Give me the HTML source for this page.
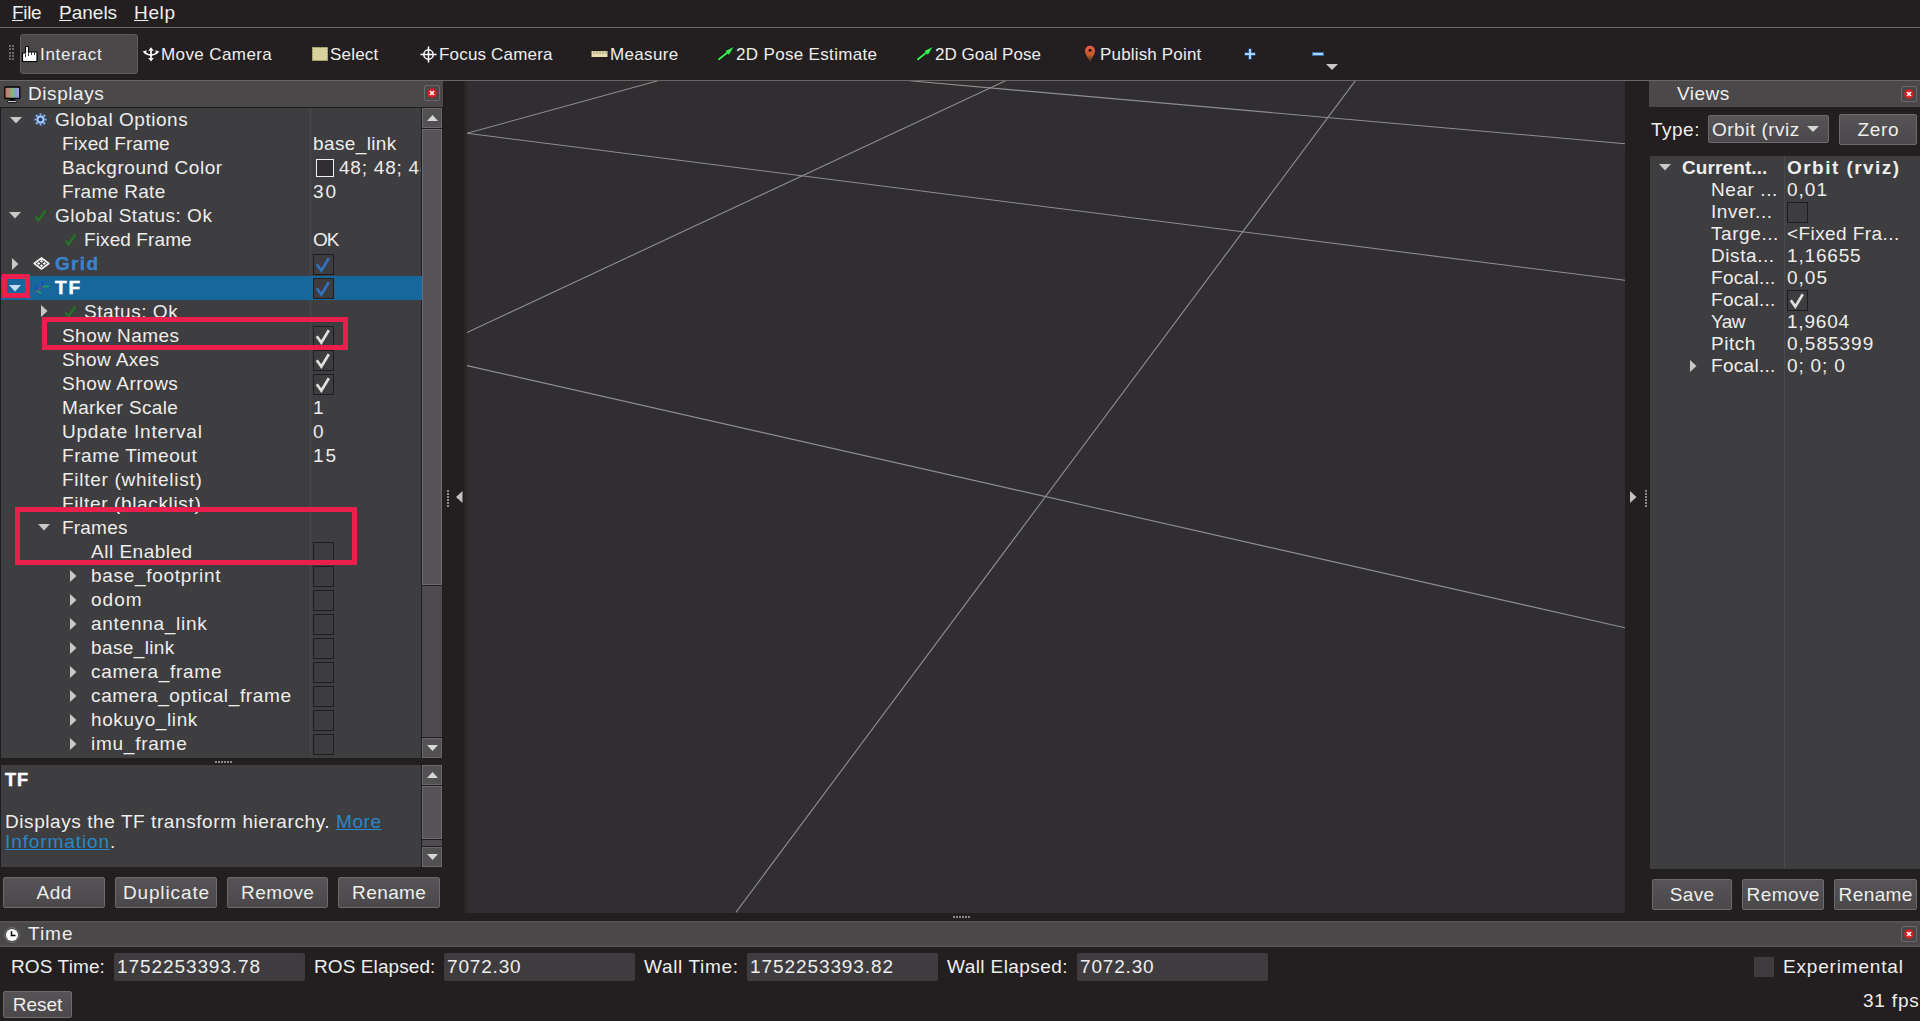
<!DOCTYPE html>
<html><head><meta charset="utf-8"><style>
html,body{margin:0;padding:0;width:1920px;height:1021px;overflow:hidden;background:#231f20}
body>div,body>svg{position:absolute}
div{position:absolute;box-sizing:border-box}
.t{white-space:nowrap;font-family:'Liberation Sans', sans-serif;color:#eeeeec}
.btn{font-family:'Liberation Sans', sans-serif;color:#eeeeec;text-align:center;letter-spacing:0.5px;background:linear-gradient(#565456,#4a484a);border:1px solid #6c6a6c;border-radius:2px;box-sizing:border-box}
</style></head><body>
<div style="left:0px;top:0px;width:1920px;height:1021px;background:#231f20"></div>
<div class="t" style="left:12px;top:3px;font-size:19px;line-height:19px;color:#eeeeec;letter-spacing:-0.333px;"><u>F</u>ile</div>
<div class="t" style="left:59px;top:3px;font-size:19px;line-height:19px;color:#eeeeec;letter-spacing:0.0px;"><u>P</u>anels</div>
<div class="t" style="left:134px;top:3px;font-size:19px;line-height:19px;color:#eeeeec;letter-spacing:0.667px;"><u>H</u>elp</div>
<div style="left:0px;top:26px;width:1920px;height:3px;background:#1f1b1c"></div>
<div style="left:0px;top:27px;width:1920px;height:1px;background:#6e6a6b"></div>
<div style="left:0px;top:80px;width:1920px;height:1px;background:#6a6667"></div>
<div style="left:9px;top:45.0px;width:2px;height:2px;background:#6a6869"></div>
<div style="left:12px;top:45.0px;width:2px;height:2px;background:#6a6869"></div>
<div style="left:9px;top:48.3px;width:2px;height:2px;background:#6a6869"></div>
<div style="left:12px;top:48.3px;width:2px;height:2px;background:#6a6869"></div>
<div style="left:9px;top:51.6px;width:2px;height:2px;background:#6a6869"></div>
<div style="left:12px;top:51.6px;width:2px;height:2px;background:#6a6869"></div>
<div style="left:9px;top:54.9px;width:2px;height:2px;background:#6a6869"></div>
<div style="left:12px;top:54.9px;width:2px;height:2px;background:#6a6869"></div>
<div style="left:9px;top:58.2px;width:2px;height:2px;background:#6a6869"></div>
<div style="left:12px;top:58.2px;width:2px;height:2px;background:#6a6869"></div>
<div style="left:20px;top:34px;width:118px;height:40px;background:#4a4748;border:1px solid #5e5c5d;border-radius:3px;box-sizing:border-box"></div>
<div class="t" style="left:40px;top:46px;font-size:17px;line-height:17px;color:#eeeeec;letter-spacing:0.714px;">Interact</div>
<div class="t" style="left:161px;top:46px;font-size:17px;line-height:17px;color:#eeeeec;letter-spacing:0.4px;">Move Camera</div>
<div class="t" style="left:330px;top:46px;font-size:17px;line-height:17px;color:#eeeeec;letter-spacing:0.2px;">Select</div>
<div class="t" style="left:439px;top:46px;font-size:17px;line-height:17px;color:#eeeeec;letter-spacing:0.182px;">Focus Camera</div>
<div class="t" style="left:610px;top:46px;font-size:17px;line-height:17px;color:#eeeeec;letter-spacing:0.333px;">Measure</div>
<div class="t" style="left:736px;top:46px;font-size:17px;line-height:17px;color:#eeeeec;letter-spacing:0.333px;">2D Pose Estimate</div>
<div class="t" style="left:935px;top:46px;font-size:17px;line-height:17px;color:#eeeeec;letter-spacing:0.0px;">2D Goal Pose</div>
<div class="t" style="left:1100px;top:46px;font-size:17px;line-height:17px;color:#eeeeec;letter-spacing:0.167px;">Publish Point</div>
<svg style="position:absolute;left:21px;top:45px;" width="18" height="18" viewBox="0 0 18 18"><path d="M4.5 1.5 h3 v5.5 h8.5 v9.5 h-14.5 v-8.5 h3z" fill="#fff" stroke="#000" stroke-width="1.2" stroke-linejoin="round"/><path d="M7.5 7v4M10.5 7v3M13.5 7v3M4.5 9v3" stroke="#222" stroke-width="0.9"/></svg>
<svg style="position:absolute;left:142px;top:46px;" width="18" height="17" viewBox="0 0 18 17"><g fill="#fff" stroke="none"><path d="M9 1.3 L6.2 4.8 H11.8 Z"/><path d="M9 15.6 L6.2 12.1 H11.8 Z"/><path d="M0.6 5.6 L4.6 4.2 L3.9 8.6 Z"/><path d="M17.4 5.6 L13.4 4.2 L14.1 8.6 Z"/></g><g stroke="#fff" stroke-width="1.7" fill="none"><path d="M9 4v8.5"/><path d="M2.8 6.6 Q9 11.6 15.2 6.6"/></g></svg>
<svg style="position:absolute;left:311px;top:46px;" width="18" height="16" viewBox="0 0 18 16"><rect x="1.5" y="1.5" width="15" height="13" fill="#d8d39a" stroke="#bdb77a" stroke-dasharray="2 1"/></svg>
<svg style="position:absolute;left:420px;top:46px;" width="17" height="17" viewBox="0 0 17 17"><circle cx="8.5" cy="8.5" r="4.7" fill="none" stroke="#fff" stroke-width="1.5"/><line x1="8.5" y1="0.5" x2="8.5" y2="16.5" stroke="#fff" stroke-width="1.5"/><line x1="0.5" y1="8.5" x2="16.5" y2="8.5" stroke="#fff" stroke-width="1.5"/></svg>
<svg style="position:absolute;left:591px;top:50px;" width="17" height="8" viewBox="0 0 17 8"><rect x="0.5" y="1" width="16" height="6" fill="#e6dcb0"/><path d="M3 1v3M6 1v3M9 1v3M12 1v3M15 1v3" stroke="#8a8060" stroke-width="0.8"/></svg>
<svg style="position:absolute;left:717px;top:46px;" width="17" height="16" viewBox="0 0 17 16"><path d="M2 13.3 L16.5 1.2" stroke="#101010" stroke-width="3.2" stroke-linecap="round" opacity="0.7"/><path d="M2 13.3 L12 5.2" stroke="#36f050" stroke-width="2" stroke-linecap="round"/><path d="M16.6 1.1 L8.6 5 L11.9 8.8 Z" fill="#36f050"/></svg>
<svg style="position:absolute;left:916px;top:46px;" width="17" height="16" viewBox="0 0 17 16"><path d="M2 13.3 L16.5 1.2" stroke="#101010" stroke-width="3.2" stroke-linecap="round" opacity="0.7"/><path d="M2 13.3 L12 5.2" stroke="#36f050" stroke-width="2" stroke-linecap="round"/><path d="M16.6 1.1 L8.6 5 L11.9 8.8 Z" fill="#36f050"/></svg>
<svg style="position:absolute;left:1084px;top:45px;" width="12" height="18" viewBox="0 0 12 18"><defs><linearGradient id="pg" x1="0" x2="0" y1="0" y2="1"><stop offset="0" stop-color="#e8604a"/><stop offset="0.55" stop-color="#c85a28"/><stop offset="1" stop-color="#6a5030" stop-opacity="0.5"/></linearGradient></defs><path d="M6 17 C3.5 12 1 9.5 1 5.8 A5 5 0 0 1 11 5.8 C11 9.5 8.5 12 6 17Z" fill="url(#pg)"/><circle cx="6" cy="5.3" r="1.5" fill="#2a0e08"/></svg>
<svg style="position:absolute;left:1244px;top:48px;" width="12" height="12" viewBox="0 0 12 12"><path d="M6 0.5v11M0.5 6h11" stroke="#2a5a9a" stroke-width="3.4"/><path d="M6 1v10M1 6h10" stroke="#a8d4ff" stroke-width="2"/></svg>
<div style="left:1312px;top:52px;width:12px;height:4px;background:#a8d4ff;border:1px solid #3a6aaa"></div>
<svg style="position:absolute;left:1326px;top:64px;" width="12" height="6" viewBox="0 0 12 6"><path d="M0 0h12L6 6z" fill="#c8c6c8"/></svg>
<div style="left:467px;top:81px;width:1158px;height:832px;background:#302e30"></div>
<svg style="position:absolute;left:467px;top:81px;" width="1158" height="832" viewBox="0 0 1158 832"><line x1="0" y1="52.30000000000001" x2="190.79999999999995" y2="-0.20000000000000284" stroke="#8f8e90" stroke-width="1.1"/><line x1="0" y1="52.30000000000001" x2="1158" y2="199.3" stroke="#8f8e90" stroke-width="1.1"/><line x1="0" y1="251.5" x2="538.5" y2="-0.20000000000000284" stroke="#8f8e90" stroke-width="1.1"/><line x1="442.70000000000005" y1="-0.20000000000000284" x2="1158" y2="62.69999999999999" stroke="#8f8e90" stroke-width="1.1"/><line x1="0" y1="284.6" x2="1158" y2="546.8" stroke="#8f8e90" stroke-width="1.1"/><line x1="268.9" y1="831.3" x2="888.2" y2="-0.20000000000000284" stroke="#8f8e90" stroke-width="1.1"/></svg>
<svg style="position:absolute;left:456px;top:491px;" width="7" height="12" viewBox="0 0 7 12"><path d="M6.5 0v12L0 6z" fill="#c4c0c4"/></svg>
<div style="left:447px;top:490px;width:2px;height:2px;background:#8a888a"></div>
<div style="left:447px;top:493px;width:2px;height:2px;background:#8a888a"></div>
<div style="left:447px;top:496px;width:2px;height:2px;background:#8a888a"></div>
<div style="left:447px;top:499px;width:2px;height:2px;background:#8a888a"></div>
<div style="left:447px;top:502px;width:2px;height:2px;background:#8a888a"></div>
<div style="left:447px;top:505px;width:2px;height:2px;background:#8a888a"></div>
<svg style="position:absolute;left:1630px;top:491px;" width="7" height="12" viewBox="0 0 7 12"><path d="M0 0v12L6.5 6z" fill="#c4c0c4"/></svg>
<div style="left:1645px;top:490px;width:2px;height:2px;background:#8a888a"></div>
<div style="left:1645px;top:493px;width:2px;height:2px;background:#8a888a"></div>
<div style="left:1645px;top:496px;width:2px;height:2px;background:#8a888a"></div>
<div style="left:1645px;top:499px;width:2px;height:2px;background:#8a888a"></div>
<div style="left:1645px;top:502px;width:2px;height:2px;background:#8a888a"></div>
<div style="left:1645px;top:505px;width:2px;height:2px;background:#8a888a"></div>
<div style="left:464px;top:81px;width:3px;height:832px;background:#282527"></div>
<div style="left:0px;top:81px;width:443px;height:27px;background:#4b4849"></div>
<div class="t" style="left:28px;top:84px;font-size:19px;line-height:19px;color:#eeeeec;letter-spacing:0.571px;">Displays</div>
<svg style="position:absolute;left:4px;top:86px;" width="17" height="18" viewBox="0 0 17 18"><defs><linearGradient id="mg" x1="0" x2="1" y1="0" y2="0"><stop offset="0" stop-color="#c8707a"/><stop offset="0.3" stop-color="#b88a70"/><stop offset="0.5" stop-color="#78c078"/><stop offset="0.75" stop-color="#8a98d0"/><stop offset="1" stop-color="#a8a0e8"/></linearGradient></defs><rect x="0.8" y="1" width="15" height="11.5" rx="1" fill="url(#mg)" stroke="#000" stroke-width="1.3"/><path d="M6.5 13h3.5l1 1.6h-5.5z" fill="#000"/><rect x="3.5" y="14.6" width="9.5" height="2" rx="1" fill="#ddd" stroke="#000" stroke-width="0.9"/></svg>
<div style="left:424px;top:85px;width:16px;height:16px;background:#4a4748;border:1px solid #6a6869;border-radius:2px;box-sizing:border-box"></div>
<svg style="position:absolute;left:427px;top:88px;" width="10" height="10" viewBox="0 0 10 10"><circle cx="5" cy="5" r="4.8" fill="#d81c22"/><path d="M3 3l4 4M7 3l-4 4" stroke="#fff" stroke-width="1.6"/></svg>
<div style="left:0px;top:108px;width:422px;height:650px;background:#3e3d3f"></div>
<div style="left:0px;top:107px;width:443px;height:1px;background:#1e1c1d"></div>
<div style="left:0px;top:108px;width:1px;height:650px;background:#1e1c1d"></div>
<div style="left:310px;top:108px;width:1px;height:650px;background:#4a494b"></div>
<div style="left:421px;top:108px;width:22px;height:650px;background:#1e1c1e"></div>
<div style="left:422px;top:108px;width:20px;height:650px;background:#4d4b4d"></div>
<div style="left:422px;top:108px;width:20px;height:20px;background:#525052;border:1px solid #6a686a;box-sizing:border-box"></div>
<svg style="position:absolute;left:427px;top:115px;" width="11" height="6" viewBox="0 0 11 6"><path d="M0 6h11L5.5 0z" fill="#d6d6d6"/></svg>
<div style="left:422px;top:738px;width:20px;height:20px;background:#525052;border:1px solid #6a686a;box-sizing:border-box"></div>
<svg style="position:absolute;left:427px;top:745px;" width="11" height="6" viewBox="0 0 11 6"><path d="M0 0h11L5.5 6z" fill="#d6d6d6"/></svg>
<div style="left:422px;top:129px;width:20px;height:456px;background:#555356;border:1px solid #6e6c6e;box-sizing:border-box"></div>
<div style="left:422px;top:585px;width:20px;height:1px;background:#1e1c1e"></div>
<div style="left:422px;top:128px;width:20px;height:1px;background:#1e1c1d"></div>
<div style="left:422px;top:737px;width:20px;height:1px;background:#1e1c1d"></div>
<div style="left:1px;top:276px;width:421px;height:24px;background:#17679d"></div>
<svg style="position:absolute;left:10px;top:117px;" width="12" height="7" viewBox="0 0 12 7"><path d="M0 0h12L6 6.5z" fill="#c8c8c8"/></svg>
<svg style="position:absolute;left:33px;top:112px;" width="15" height="15" viewBox="0 0 15 15"><g transform="translate(7.5,7.5) scale(0.87)"><g fill="#a9cdf8" stroke="#2a4a8a" stroke-width="0.6"><rect x="-1.3" y="-7.2" width="2.6" height="3.2" transform="rotate(0)"/><rect x="-1.3" y="-7.2" width="2.6" height="3.2" transform="rotate(45)"/><rect x="-1.3" y="-7.2" width="2.6" height="3.2" transform="rotate(90)"/><rect x="-1.3" y="-7.2" width="2.6" height="3.2" transform="rotate(135)"/><rect x="-1.3" y="-7.2" width="2.6" height="3.2" transform="rotate(180)"/><rect x="-1.3" y="-7.2" width="2.6" height="3.2" transform="rotate(225)"/><rect x="-1.3" y="-7.2" width="2.6" height="3.2" transform="rotate(270)"/><rect x="-1.3" y="-7.2" width="2.6" height="3.2" transform="rotate(315)"/></g><circle r="5" fill="#a9cdf8" stroke="#2a4a8a" stroke-width="0.6"/><circle r="2.3" fill="#2a3a6a"/></g></svg>
<div class="t" style="left:55px;top:110px;font-size:19px;line-height:19px;color:#eeeeec;letter-spacing:0.538px;">Global Options</div>
<div class="t" style="left:62px;top:134px;font-size:19px;line-height:19px;color:#eeeeec;letter-spacing:0.1px;">Fixed Frame</div>
<div class="t" style="left:313px;top:134px;font-size:19px;line-height:19px;color:#eeeeec;letter-spacing:0.375px;">base_link</div>
<div class="t" style="left:62px;top:158px;font-size:19px;line-height:19px;color:#eeeeec;letter-spacing:0.533px;">Background Color</div>
<div style="left:316px;top:159px;width:18px;height:18px;background:#302e31;border:1.5px solid #f0f0f0;box-sizing:border-box"></div>
<div style="left:339px;top:158px;width:82px;height:22px;overflow:hidden"><div class="t" style="left:0;top:0;font-size:19px;line-height:19px;color:#eeeeec;letter-spacing:0.778px;white-space:nowrap">48; 48; 48</div></div>
<div class="t" style="left:62px;top:182px;font-size:19px;line-height:19px;color:#eeeeec;letter-spacing:0.333px;">Frame Rate</div>
<div class="t" style="left:313px;top:182px;font-size:19px;line-height:19px;color:#eeeeec;letter-spacing:2.0px;">30</div>
<svg style="position:absolute;left:9px;top:212px;" width="12" height="7" viewBox="0 0 12 7"><path d="M0 0h12L6 6.5z" fill="#c8c8c8"/></svg>
<svg style="position:absolute;left:34px;top:209px;" width="13" height="13" viewBox="0 0 13 13"><path d="M1.5 7.5 L4.5 11.5 L11.5 1.5" fill="none" stroke="#217a26" stroke-width="2.3" opacity="0.9"/></svg>
<div class="t" style="left:55px;top:206px;font-size:19px;line-height:19px;color:#eeeeec;letter-spacing:0.5px;">Global Status: Ok</div>
<svg style="position:absolute;left:64px;top:233px;" width="13" height="13" viewBox="0 0 13 13"><path d="M1.5 7.5 L4.5 11.5 L11.5 1.5" fill="none" stroke="#217a26" stroke-width="2.3" opacity="0.9"/></svg>
<div class="t" style="left:84px;top:230px;font-size:19px;line-height:19px;color:#eeeeec;letter-spacing:0.1px;">Fixed Frame</div>
<div class="t" style="left:313px;top:230px;font-size:19px;line-height:19px;color:#eeeeec;letter-spacing:-1.0px;">OK</div>
<svg style="position:absolute;left:12px;top:258px;" width="7" height="12" viewBox="0 0 7 12"><path d="M0 0v12L6.5 6z" fill="#c8c8c8"/></svg>
<svg style="position:absolute;left:33px;top:257px;" width="17" height="13" viewBox="0 0 17 13"><path d="M8.5 1 L15.8 6.5 L8.5 12 L1.2 6.5 Z" fill="none" stroke="#f4f4f4" stroke-width="1.6" stroke-linejoin="round"/><path d="M8.5 2.8L10.225 4.3L8.5 5.8L6.775 4.3Z" fill="#f4f4f4"/><path d="M5.7 5.0L7.425 6.5L5.7 8.0L3.9750000000000005 6.5Z" fill="#f4f4f4"/><path d="M11.3 5.0L13.025 6.5L11.3 8.0L9.575000000000001 6.5Z" fill="#f4f4f4"/><path d="M8.5 7.199999999999999L10.225 8.7L8.5 10.2L6.775 8.7Z" fill="#f4f4f4"/></svg>
<div class="t" style="left:55px;top:254px;font-size:19px;line-height:19px;color:#3a82cc;letter-spacing:1.333px;font-weight:bold;-webkit-text-stroke:0.4px #3a82cc">Grid</div>
<div style="left:313px;top:254px;width:21px;height:21px;background:#3d3c3e;border:1px solid #1f1d1f;box-sizing:border-box"></div>
<svg style="position:absolute;left:315px;top:257px;" width="17" height="16" viewBox="0 0 17 16"><path d="M1.8 7.2 L6.3 13.6 L13.8 1.2" fill="none" stroke="#2f72c0" stroke-width="2.7" stroke-linejoin="miter"/></svg>
<svg style="position:absolute;left:9px;top:285px;" width="12" height="7" viewBox="0 0 12 7"><path d="M0 0h12L6 6.5z" fill="#c8dcf0"/></svg>
<svg style="position:absolute;left:33px;top:279px;" width="17" height="16" viewBox="0 0 17 16"><g stroke-width="1.5" opacity="0.85"><path d="M9.5 2V7.5" stroke="#1a3ad8"/><path d="M10 7.5H16" stroke="#20b848"/><path d="M9.5 7.5L1.5 14" stroke="#c04050" stroke-dasharray="1.5 1"/><path d="M3.6 6.8V10.6" stroke="#1a3ad8"/><path d="M4.5 12.2L8 14" stroke="#20b848"/></g></svg>
<div class="t" style="left:55px;top:278px;font-size:19px;line-height:19px;color:#ffffff;letter-spacing:2.0px;font-weight:bold;-webkit-text-stroke:0.5px #fff">TF</div>
<div style="left:313px;top:278px;width:21px;height:21px;background:#3d3c3e;border:1px solid #1f1d1f;box-sizing:border-box"></div>
<svg style="position:absolute;left:315px;top:281px;" width="17" height="16" viewBox="0 0 17 16"><path d="M1.8 7.2 L6.3 13.6 L13.8 1.2" fill="none" stroke="#2f72c0" stroke-width="2.7" stroke-linejoin="miter"/></svg>
<svg style="position:absolute;left:41px;top:305px;" width="7" height="12" viewBox="0 0 7 12"><path d="M0 0v12L6.5 6z" fill="#c8c8c8"/></svg>
<svg style="position:absolute;left:64px;top:305px;" width="13" height="13" viewBox="0 0 13 13"><path d="M1.5 7.5 L4.5 11.5 L11.5 1.5" fill="none" stroke="#217a26" stroke-width="2.3" opacity="0.9"/></svg>
<div class="t" style="left:84px;top:302px;font-size:19px;line-height:19px;color:#eeeeec;letter-spacing:0.556px;">Status: Ok</div>
<div class="t" style="left:62px;top:326px;font-size:19px;line-height:19px;color:#eeeeec;letter-spacing:0.444px;">Show Names</div>
<div class="t" style="left:62px;top:350px;font-size:19px;line-height:19px;color:#eeeeec;letter-spacing:0.375px;">Show Axes</div>
<div class="t" style="left:62px;top:374px;font-size:19px;line-height:19px;color:#eeeeec;letter-spacing:0.5px;">Show Arrows</div>
<div class="t" style="left:62px;top:398px;font-size:19px;line-height:19px;color:#eeeeec;letter-spacing:0.364px;">Marker Scale</div>
<div class="t" style="left:62px;top:422px;font-size:19px;line-height:19px;color:#eeeeec;letter-spacing:0.786px;">Update Interval</div>
<div class="t" style="left:62px;top:446px;font-size:19px;line-height:19px;color:#eeeeec;letter-spacing:0.583px;">Frame Timeout</div>
<div class="t" style="left:62px;top:470px;font-size:19px;line-height:19px;color:#eeeeec;letter-spacing:0.706px;">Filter (whitelist)</div>
<div class="t" style="left:62px;top:494px;font-size:19px;line-height:19px;color:#eeeeec;letter-spacing:0.647px;">Filter (blacklist)</div>
<div style="left:313px;top:326px;width:21px;height:21px;background:#3d3c3e;border:1px solid #1f1d1f;box-sizing:border-box"></div>
<svg style="position:absolute;left:315px;top:329px;" width="17" height="16" viewBox="0 0 17 16"><path d="M1.8 7.2 L6.3 13.6 L13.8 1.2" fill="none" stroke="#e0e0e0" stroke-width="2.7" stroke-linejoin="miter"/></svg>
<div style="left:313px;top:350px;width:21px;height:21px;background:#3d3c3e;border:1px solid #1f1d1f;box-sizing:border-box"></div>
<svg style="position:absolute;left:315px;top:353px;" width="17" height="16" viewBox="0 0 17 16"><path d="M1.8 7.2 L6.3 13.6 L13.8 1.2" fill="none" stroke="#e0e0e0" stroke-width="2.7" stroke-linejoin="miter"/></svg>
<div style="left:313px;top:374px;width:21px;height:21px;background:#3d3c3e;border:1px solid #1f1d1f;box-sizing:border-box"></div>
<svg style="position:absolute;left:315px;top:377px;" width="17" height="16" viewBox="0 0 17 16"><path d="M1.8 7.2 L6.3 13.6 L13.8 1.2" fill="none" stroke="#e0e0e0" stroke-width="2.7" stroke-linejoin="miter"/></svg>
<div class="t" style="left:313px;top:398px;font-size:19px;line-height:19px;color:#eeeeec;letter-spacing:0px;">1</div>
<div class="t" style="left:313px;top:422px;font-size:19px;line-height:19px;color:#eeeeec;letter-spacing:0px;">0</div>
<div class="t" style="left:313px;top:446px;font-size:19px;line-height:19px;color:#eeeeec;letter-spacing:2.0px;">15</div>
<svg style="position:absolute;left:38px;top:524px;" width="12" height="7" viewBox="0 0 12 7"><path d="M0 0h12L6 6.5z" fill="#c8c8c8"/></svg>
<div class="t" style="left:62px;top:518px;font-size:19px;line-height:19px;color:#eeeeec;letter-spacing:0.2px;">Frames</div>
<div class="t" style="left:91px;top:542px;font-size:19px;line-height:19px;color:#eeeeec;letter-spacing:0.5px;">All Enabled</div>
<div style="left:313px;top:542px;width:21px;height:21px;background:#3d3c3e;border:1px solid #1f1d1f;box-sizing:border-box"></div>
<svg style="position:absolute;left:70px;top:570px;" width="7" height="12" viewBox="0 0 7 12"><path d="M0 0v12L6.5 6z" fill="#c8c8c8"/></svg>
<div class="t" style="left:91px;top:566px;font-size:19px;line-height:19px;color:#eeeeec;letter-spacing:0.692px;">base_footprint</div>
<div style="left:313px;top:566px;width:21px;height:21px;background:#3d3c3e;border:1px solid #1f1d1f;box-sizing:border-box"></div>
<svg style="position:absolute;left:70px;top:594px;" width="7" height="12" viewBox="0 0 7 12"><path d="M0 0v12L6.5 6z" fill="#c8c8c8"/></svg>
<div class="t" style="left:91px;top:590px;font-size:19px;line-height:19px;color:#eeeeec;letter-spacing:1.0px;">odom</div>
<div style="left:313px;top:590px;width:21px;height:21px;background:#3d3c3e;border:1px solid #1f1d1f;box-sizing:border-box"></div>
<svg style="position:absolute;left:70px;top:618px;" width="7" height="12" viewBox="0 0 7 12"><path d="M0 0v12L6.5 6z" fill="#c8c8c8"/></svg>
<div class="t" style="left:91px;top:614px;font-size:19px;line-height:19px;color:#eeeeec;letter-spacing:0.727px;">antenna_link</div>
<div style="left:313px;top:614px;width:21px;height:21px;background:#3d3c3e;border:1px solid #1f1d1f;box-sizing:border-box"></div>
<svg style="position:absolute;left:70px;top:642px;" width="7" height="12" viewBox="0 0 7 12"><path d="M0 0v12L6.5 6z" fill="#c8c8c8"/></svg>
<div class="t" style="left:91px;top:638px;font-size:19px;line-height:19px;color:#eeeeec;letter-spacing:0.375px;">base_link</div>
<div style="left:313px;top:638px;width:21px;height:21px;background:#3d3c3e;border:1px solid #1f1d1f;box-sizing:border-box"></div>
<svg style="position:absolute;left:70px;top:666px;" width="7" height="12" viewBox="0 0 7 12"><path d="M0 0v12L6.5 6z" fill="#c8c8c8"/></svg>
<div class="t" style="left:91px;top:662px;font-size:19px;line-height:19px;color:#eeeeec;letter-spacing:0.727px;">camera_frame</div>
<div style="left:313px;top:662px;width:21px;height:21px;background:#3d3c3e;border:1px solid #1f1d1f;box-sizing:border-box"></div>
<svg style="position:absolute;left:70px;top:690px;" width="7" height="12" viewBox="0 0 7 12"><path d="M0 0v12L6.5 6z" fill="#c8c8c8"/></svg>
<div class="t" style="left:91px;top:686px;font-size:19px;line-height:19px;color:#eeeeec;letter-spacing:0.632px;">camera_optical_frame</div>
<div style="left:313px;top:686px;width:21px;height:21px;background:#3d3c3e;border:1px solid #1f1d1f;box-sizing:border-box"></div>
<svg style="position:absolute;left:70px;top:714px;" width="7" height="12" viewBox="0 0 7 12"><path d="M0 0v12L6.5 6z" fill="#c8c8c8"/></svg>
<div class="t" style="left:91px;top:710px;font-size:19px;line-height:19px;color:#eeeeec;letter-spacing:0.6px;">hokuyo_link</div>
<div style="left:313px;top:710px;width:21px;height:21px;background:#3d3c3e;border:1px solid #1f1d1f;box-sizing:border-box"></div>
<svg style="position:absolute;left:70px;top:738px;" width="7" height="12" viewBox="0 0 7 12"><path d="M0 0v12L6.5 6z" fill="#c8c8c8"/></svg>
<div class="t" style="left:91px;top:734px;font-size:19px;line-height:19px;color:#eeeeec;letter-spacing:0.75px;">imu_frame</div>
<div style="left:313px;top:734px;width:21px;height:21px;background:#3d3c3e;border:1px solid #1f1d1f;box-sizing:border-box"></div>
<div style="left:2px;top:274px;width:28px;height:24px;border:5px solid #ec1e4e;box-sizing:border-box"></div>
<div style="left:42px;top:317px;width:306px;height:33px;border:5px solid #ec1e4e;box-sizing:border-box"></div>
<div style="left:15px;top:507px;width:342px;height:58px;border:5px solid #ec1e4e;box-sizing:border-box"></div>
<div style="left:0px;top:758px;width:443px;height:7px;background:#231f20"></div>
<div style="left:215px;top:761px;width:2px;height:2px;background:#8a888a"></div>
<div style="left:218px;top:761px;width:2px;height:2px;background:#8a888a"></div>
<div style="left:221px;top:761px;width:2px;height:2px;background:#8a888a"></div>
<div style="left:224px;top:761px;width:2px;height:2px;background:#8a888a"></div>
<div style="left:227px;top:761px;width:2px;height:2px;background:#8a888a"></div>
<div style="left:230px;top:761px;width:2px;height:2px;background:#8a888a"></div>
<div style="left:0px;top:765px;width:422px;height:102px;background:#3e3d3f"></div>
<div style="left:0px;top:765px;width:1px;height:102px;background:#1e1c1d"></div>
<div style="left:421px;top:765px;width:22px;height:102px;background:#1e1c1e"></div>
<div style="left:422px;top:765px;width:20px;height:102px;background:#4d4b4d"></div>
<div style="left:422px;top:765px;width:20px;height:20px;background:#525052;border:1px solid #6a686a;box-sizing:border-box"></div>
<svg style="position:absolute;left:427px;top:772px;" width="11" height="6" viewBox="0 0 11 6"><path d="M0 6h11L5.5 0z" fill="#d6d6d6"/></svg>
<div style="left:422px;top:847px;width:20px;height:20px;background:#525052;border:1px solid #6a686a;box-sizing:border-box"></div>
<svg style="position:absolute;left:427px;top:854px;" width="11" height="6" viewBox="0 0 11 6"><path d="M0 0h11L5.5 6z" fill="#d6d6d6"/></svg>
<div style="left:422px;top:786px;width:20px;height:53px;background:#555356;border:1px solid #6e6c6e;box-sizing:border-box"></div>
<div style="left:422px;top:839px;width:20px;height:1px;background:#1e1c1e"></div>
<div style="left:422px;top:785px;width:20px;height:1px;background:#1e1c1d"></div>
<div style="left:422px;top:846px;width:20px;height:1px;background:#1e1c1d"></div>
<div class="t" style="left:5px;top:771px;font-size:18px;line-height:18px;color:#ffffff;letter-spacing:1.0px;font-weight:bold;-webkit-text-stroke:0.5px #fff">TF</div>
<div class="t" style="left:5px;top:812px;font-size:19px;line-height:19px;color:#eeeeec;letter-spacing:0.575px;">Displays the TF transform hierarchy. <span style="color:#2b87c6;text-decoration:underline">More</span></div>
<div class="t" style="left:5px;top:832px;font-size:19px;line-height:19px;color:#eeeeec;letter-spacing:0.909px;"><span style="color:#2b87c6;text-decoration:underline">Information</span>.</div>
<div class="btn" style="left:3px;top:877px;width:102px;height:31px;line-height:29px;font-size:19px;letter-spacing:0.5px;text-indent:0.5px">Add</div>
<div class="btn" style="left:115px;top:877px;width:102px;height:31px;line-height:29px;font-size:19px;letter-spacing:0.875px;text-indent:0.875px">Duplicate</div>
<div class="btn" style="left:227px;top:877px;width:101px;height:31px;line-height:29px;font-size:19px;letter-spacing:0.4px;text-indent:0.4px">Remove</div>
<div class="btn" style="left:338px;top:877px;width:102px;height:31px;line-height:29px;font-size:19px;letter-spacing:0.4px;text-indent:0.4px">Rename</div>
<div style="left:1649px;top:81px;width:271px;height:26px;background:#4b4849"></div>
<div class="t" style="left:1677px;top:84px;font-size:19px;line-height:19px;color:#eeeeec;letter-spacing:0.5px;">Views</div>
<div style="left:1901px;top:86px;width:16px;height:16px;background:#4a4748;border:1px solid #6a6869;border-radius:2px;box-sizing:border-box"></div>
<svg style="position:absolute;left:1904px;top:89px;" width="10" height="10" viewBox="0 0 10 10"><circle cx="5" cy="5" r="4.8" fill="#d81c22"/><path d="M3 3l4 4M7 3l-4 4" stroke="#fff" stroke-width="1.6"/></svg>
<div class="t" style="left:1651px;top:120px;font-size:19px;line-height:19px;color:#eeeeec;letter-spacing:0.5px;">Type:</div>
<div class="btn" style="left:1708px;top:115px;width:121px;height:28px;text-align:left"></div>
<div style="left:1712px;top:118px;width:88px;height:24px;overflow:hidden"><div class="t" style="left:0;top:2px;font-size:19px;line-height:19px;color:#eeeeec;letter-spacing:0.5px;white-space:nowrap">Orbit (rviz)</div></div>
<svg style="position:absolute;left:1807px;top:126px;" width="12" height="7" viewBox="0 0 12 7"><path d="M0 0h12L6 6z" fill="#d6d6d6"/></svg>
<div class="btn" style="left:1839px;top:114px;width:78px;height:31px;line-height:29px;font-size:19px;letter-spacing:0.667px;text-indent:0.667px">Zero</div>
<div style="left:1650px;top:156px;width:270px;height:713px;background:#3e3d3f"></div>
<div style="left:1784px;top:156px;width:1px;height:713px;background:#4a494b"></div>
<svg style="position:absolute;left:1659px;top:164px;" width="12" height="7" viewBox="0 0 12 7"><path d="M0 0h12L6 6.5z" fill="#c8c8c8"/></svg>
<div class="t" style="left:1682px;top:158px;font-size:19px;line-height:19px;color:#eeeeec;letter-spacing:0.1px;font-weight:bold;">Current...</div>
<div class="t" style="left:1787px;top:158px;font-size:19px;line-height:19px;color:#eeeeec;letter-spacing:1.455px;font-weight:bold;">Orbit (rviz)</div>
<div class="t" style="left:1711px;top:180px;font-size:19px;line-height:19px;color:#eeeeec;letter-spacing:0.571px;">Near ...</div>
<div class="t" style="left:1787px;top:180px;font-size:19px;line-height:19px;color:#eeeeec;letter-spacing:1.0px;">0,01</div>
<div class="t" style="left:1711px;top:202px;font-size:19px;line-height:19px;color:#eeeeec;letter-spacing:0.571px;">Inver...</div>
<div style="left:1787px;top:202px;width:21px;height:21px;background:#3d3c3e;border:1px solid #1f1d1f;box-sizing:border-box"></div>
<div class="t" style="left:1711px;top:224px;font-size:19px;line-height:19px;color:#eeeeec;letter-spacing:0.571px;">Targe...</div>
<div class="t" style="left:1787px;top:224px;font-size:19px;line-height:19px;color:#eeeeec;letter-spacing:0.417px;">&lt;Fixed Fra...</div>
<div class="t" style="left:1711px;top:246px;font-size:19px;line-height:19px;color:#eeeeec;letter-spacing:0.571px;">Dista...</div>
<div class="t" style="left:1787px;top:246px;font-size:19px;line-height:19px;color:#eeeeec;letter-spacing:0.833px;">1,16655</div>
<div class="t" style="left:1711px;top:268px;font-size:19px;line-height:19px;color:#eeeeec;letter-spacing:0.286px;">Focal...</div>
<div class="t" style="left:1787px;top:268px;font-size:19px;line-height:19px;color:#eeeeec;letter-spacing:1.0px;">0,05</div>
<div class="t" style="left:1711px;top:290px;font-size:19px;line-height:19px;color:#eeeeec;letter-spacing:0.286px;">Focal...</div>
<div style="left:1787px;top:290px;width:21px;height:21px;background:#3d3c3e;border:1px solid #1f1d1f;box-sizing:border-box"></div>
<svg style="position:absolute;left:1789px;top:293px;" width="17" height="16" viewBox="0 0 17 16"><path d="M1.8 7.2 L6.3 13.6 L13.8 1.2" fill="none" stroke="#e0e0e0" stroke-width="2.7" stroke-linejoin="miter"/></svg>
<div class="t" style="left:1711px;top:312px;font-size:19px;line-height:19px;color:#eeeeec;letter-spacing:-0.5px;">Yaw</div>
<div class="t" style="left:1787px;top:312px;font-size:19px;line-height:19px;color:#eeeeec;letter-spacing:0.8px;">1,9604</div>
<div class="t" style="left:1711px;top:334px;font-size:19px;line-height:19px;color:#eeeeec;letter-spacing:0.5px;">Pitch</div>
<div class="t" style="left:1787px;top:334px;font-size:19px;line-height:19px;color:#eeeeec;letter-spacing:1.0px;">0,585399</div>
<div class="t" style="left:1711px;top:356px;font-size:19px;line-height:19px;color:#eeeeec;letter-spacing:0.286px;">Focal...</div>
<div class="t" style="left:1787px;top:356px;font-size:19px;line-height:19px;color:#eeeeec;letter-spacing:0.833px;">0; 0; 0</div>
<svg style="position:absolute;left:1690px;top:360px;" width="7" height="12" viewBox="0 0 7 12"><path d="M0 0v12L6.5 6z" fill="#c8c8c8"/></svg>
<div class="btn" style="left:1652px;top:879px;width:80px;height:31px;line-height:29px;font-size:19px;letter-spacing:0.333px;text-indent:0.333px">Save</div>
<div class="btn" style="left:1742px;top:879px;width:82px;height:31px;line-height:29px;font-size:19px;letter-spacing:0.4px;text-indent:0.4px">Remove</div>
<div class="btn" style="left:1834px;top:879px;width:83px;height:31px;line-height:29px;font-size:19px;letter-spacing:0.4px;text-indent:0.4px">Rename</div>
<div style="left:953px;top:916px;width:2px;height:2px;background:#8a888a"></div>
<div style="left:956px;top:916px;width:2px;height:2px;background:#8a888a"></div>
<div style="left:959px;top:916px;width:2px;height:2px;background:#8a888a"></div>
<div style="left:962px;top:916px;width:2px;height:2px;background:#8a888a"></div>
<div style="left:965px;top:916px;width:2px;height:2px;background:#8a888a"></div>
<div style="left:968px;top:916px;width:2px;height:2px;background:#8a888a"></div>
<div style="left:0px;top:921px;width:1920px;height:26px;background:#4b4849;border-top:2px solid #545153;border-bottom:2px solid #545153"></div>
<svg style="position:absolute;left:3px;top:926px;" width="18" height="18" viewBox="0 0 18 18"><circle cx="9" cy="9" r="7.3" fill="none" stroke="#6a686a" stroke-width="1.2"/><circle cx="9" cy="9" r="6.1" fill="#fafafa"/><path d="M8.5 5.3v4.3h4" fill="none" stroke="#000" stroke-width="1.5"/></svg>
<div class="t" style="left:28px;top:924px;font-size:19px;line-height:19px;color:#eeeeec;letter-spacing:1.0px;">Time</div>
<div style="left:1901px;top:926px;width:16px;height:16px;background:#4a4748;border:1px solid #6a6869;border-radius:2px;box-sizing:border-box"></div>
<svg style="position:absolute;left:1904px;top:929px;" width="10" height="10" viewBox="0 0 10 10"><circle cx="5" cy="5" r="4.8" fill="#d81c22"/><path d="M3 3l4 4M7 3l-4 4" stroke="#fff" stroke-width="1.6"/></svg>
<div class="t" style="left:11px;top:957px;font-size:19px;line-height:19px;color:#eeeeec;letter-spacing:0.125px;">ROS Time:</div>
<div style="left:114px;top:953px;width:191px;height:28px;background:#3e3c3e;border-radius:2px"></div>
<div class="t" style="left:117px;top:957px;font-size:19px;line-height:19px;color:#eeeeec;letter-spacing:0.917px;">1752253393.78</div>
<div class="t" style="left:314px;top:957px;font-size:19px;line-height:19px;color:#eeeeec;letter-spacing:0.091px;">ROS Elapsed:</div>
<div style="left:444px;top:953px;width:191px;height:28px;background:#3e3c3e;border-radius:2px"></div>
<div class="t" style="left:447px;top:957px;font-size:19px;line-height:19px;color:#eeeeec;letter-spacing:0.833px;">7072.30</div>
<div class="t" style="left:644px;top:957px;font-size:19px;line-height:19px;color:#eeeeec;letter-spacing:0.667px;">Wall Time:</div>
<div style="left:747px;top:953px;width:191px;height:28px;background:#3e3c3e;border-radius:2px"></div>
<div class="t" style="left:750px;top:957px;font-size:19px;line-height:19px;color:#eeeeec;letter-spacing:0.917px;">1752253393.82</div>
<div class="t" style="left:947px;top:957px;font-size:19px;line-height:19px;color:#eeeeec;letter-spacing:0.417px;">Wall Elapsed:</div>
<div style="left:1077px;top:953px;width:191px;height:28px;background:#3e3c3e;border-radius:2px"></div>
<div class="t" style="left:1080px;top:957px;font-size:19px;line-height:19px;color:#eeeeec;letter-spacing:0.833px;">7072.30</div>
<div style="left:1754px;top:957px;width:20px;height:20px;background:#3e3c3e;border-radius:1px"></div>
<div class="t" style="left:1783px;top:957px;font-size:19px;line-height:19px;color:#eeeeec;letter-spacing:0.818px;">Experimental</div>
<div class="btn" style="left:3px;top:991px;width:69px;height:27px;line-height:25px;font-size:19px;letter-spacing:0.0px;text-indent:0.0px">Reset</div>
<div class="t" style="left:1863px;top:991px;font-size:19px;line-height:19px;color:#eeeeec;letter-spacing:0.8px;">31 fps</div>
</body></html>
